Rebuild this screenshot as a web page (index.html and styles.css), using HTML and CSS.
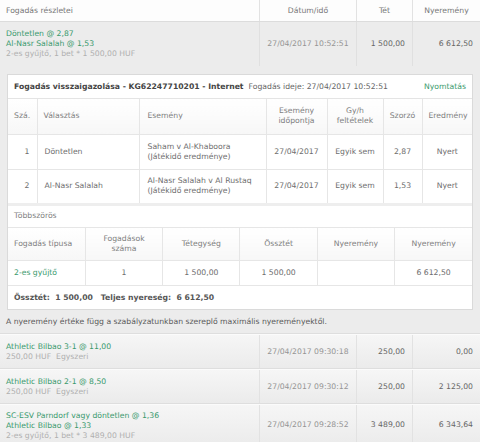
FILE: index.html
```html
<!DOCTYPE html>
<html lang="hu">
<head>
  <meta charset="UTF-8" />
  <meta name="viewport" content="width=device-width, initial-scale=1.0"/>
  <title>Fogadások</title>
  <link rel="stylesheet" href="styles.css">
</head>
<body>
  <div class="bets">
    <div class="bets-head">
      <div class="cell cell-desc">Fogadás részletei</div>
      <div class="cell cell-center">Dátum/idő</div>
      <div class="cell cell-center">Tét</div>
      <div class="cell cell-center">Nyeremény</div>
    </div>

    <div class="bet bet-open">
      <div class="bet-row">
        <div class="cell cell-desc">
          <span class="pick">Döntetlen @ 2,87</span>
          <span class="pick">Al-Nasr Salalah @ 1,53</span>
          <span class="meta">2-es gyűjtő, 1 bet * 1 500,00 HUF</span>
        </div>
        <div class="cell cell-center cell-date">27/04/2017 10:52:51</div>
        <div class="cell cell-num">1 500,00</div>
        <div class="cell cell-num">6 612,50</div>
      </div>

      <div class="detail">
        <div class="detail-title">
          <strong>Fogadás visszaigazolása - KG62247710201 - Internet</strong>
          <span class="detail-time">Fogadás ideje: 27/04/2017 10:52:51</span>
          <a class="print" href="#">Nyomtatás</a>
        </div>

        <table class="grid grid-events">
          <colgroup>
            <col style="width:29px"><col style="width:102px"><col style="width:127px"><col style="width:61px">
            <col style="width:56px"><col style="width:39px"><col style="width:50px">
          </colgroup>
          <thead>
            <tr>
              <th class="left">Szá.</th>
              <th class="left">Választás</th>
              <th class="left">Esemény</th>
              <th>Esemény<br>időpontja</th>
              <th>Gy/h<br>feltételek</th>
              <th>Szorzó</th>
              <th>Eredmény</th>
            </tr>
          </thead>
          <tbody>
            <tr>
              <td class="right">1</td>
              <td class="left">Döntetlen</td>
              <td class="left">Saham v Al-Khaboora<br>(Játékidő eredménye)</td>
              <td>27/04/2017</td>
              <td>Egyik sem</td>
              <td>2,87</td>
              <td>Nyert</td>
            </tr>
            <tr>
              <td class="right">2</td>
              <td class="left">Al-Nasr Salalah</td>
              <td class="left">Al-Nasr Salalah v Al Rustaq<br>(Játékidő eredménye)</td>
              <td>27/04/2017</td>
              <td>Egyik sem</td>
              <td>1,53</td>
              <td>Nyert</td>
            </tr>
          </tbody>
        </table>

        <div class="section-label">Többszörös</div>

        <table class="grid grid-multi">
          <thead>
            <tr>
              <th class="left">Fogadás típusa</th>
              <th>Fogadások<br>száma</th>
              <th>Tétegység</th>
              <th>Össztét</th>
              <th>Nyeremény</th>
              <th>Nyeremény</th>
            </tr>
          </thead>
          <tbody>
            <tr>
              <td class="left"><a class="pick" href="#">2-es gyűjtő</a></td>
              <td>1</td>
              <td>1 500,00</td>
              <td>1 500,00</td>
              <td></td>
              <td>6 612,50</td>
            </tr>
          </tbody>
        </table>

        <div class="totals">Össztét:&nbsp; 1 500,00 &nbsp;&nbsp;Teljes nyereség:&nbsp; 6 612,50</div>
      </div>

      <p class="note">A nyeremény értéke függ a szabályzatunkban szereplő maximális nyereményektől.</p>
    </div>

    <div class="bet">
      <div class="bet-row">
        <div class="cell cell-desc">
          <span class="pick">Athletic Bilbao 3-1 @ 11,00</span>
          <span class="meta">250,00 HUF &nbsp;Egyszeri</span>
        </div>
        <div class="cell cell-center cell-date">27/04/2017 09:30:18</div>
        <div class="cell cell-num">250,00</div>
        <div class="cell cell-num">0,00</div>
      </div>
    </div>

    <div class="bet">
      <div class="bet-row">
        <div class="cell cell-desc">
          <span class="pick">Athletic Bilbao 2-1 @ 8,50</span>
          <span class="meta">250,00 HUF &nbsp;Egyszeri</span>
        </div>
        <div class="cell cell-center cell-date">27/04/2017 09:30:12</div>
        <div class="cell cell-num">250,00</div>
        <div class="cell cell-num">2 125,00</div>
      </div>
    </div>

    <div class="bet">
      <div class="bet-row bet-row-tall">
        <div class="cell cell-desc">
          <span class="pick">SC-ESV Parndorf vagy döntetlen @ 1,36</span>
          <span class="pick">Athletic Bilbao @ 1,33</span>
          <span class="meta">2-es gyűjtő, 1 bet * 3 489,00 HUF</span>
        </div>
        <div class="cell cell-center cell-date">27/04/2017 09:28:52</div>
        <div class="cell cell-num">3 489,00</div>
        <div class="cell cell-num">6 343,64</div>
      </div>
    </div>
  </div>
</body>
</html>
```

FILE: styles.css
```css
* {
  box-sizing: border-box;
}

body {
  margin: 0;
  font-family: "DejaVu Sans", Verdana, sans-serif;
  font-size: 7.7px;
  line-height: 10px;
  color: #666;
  background: #ececec;
  overflow: hidden;
}

a {
  text-decoration: none;
}

.bets-head,
.bet-row {
  display: grid;
  grid-template-columns: 259px 97px 56px 1fr;
}

.bets-head {
  height: 22px;
  background: #fdfdfd;
  border-bottom: 1px solid #dcdcdc;
  color: #777;
}

.cell {
  display: flex;
  align-items: center;
  padding: 0 7px;
}

.cell + .cell {
  border-left: 1px solid #e2e2e2;
}

.cell-desc {
  flex-direction: column;
  align-items: flex-start;
  justify-content: center;
  padding-left: 6px;
}

.cell-center {
  justify-content: center;
}

.cell-num {
  justify-content: flex-end;
}

.cell-date {
  color: #959595;
}

.pick {
  color: #3a9a6e;
}

.meta {
  color: #b0b0b0;
}

.bet {
  background: linear-gradient(#f6f6f6, #ebebeb);
  border-top: 1px solid #fbfbfb;
  border-bottom: 1px solid #dedede;
}

.bet-row {
  height: 33px;
}

.bet-row-tall {
  height: 40px;
}

.bet-row-tall .cell-desc {
  justify-content: flex-start;
  padding-top: 6px;
}

.bet-open {
  background: #ececec;
  border-top: 0;
}

.bet-open .bet-row {
  height: 44px;
}

.bet-open .cell + .cell {
  border-left-color: #e0e0e0;
}

.detail {
  margin: 8px 0 0 7px;
  width: 466px;
  background: #fff;
  border: 1px solid #dadada;
}

.detail-title {
  display: flex;
  align-items: center;
  height: 24px;
  padding: 0 6px;
  border-bottom: 1px solid #e4e4e4;
  color: #666;
}

.detail-title strong {
  color: #444;
}

.detail-time {
  margin-left: 5px;
}

.print {
  margin-left: auto;
  color: #3a9a6e;
}

.grid {
  width: 100%;
  table-layout: fixed;
  border-collapse: collapse;
  color: #6e6e6e;
}

.grid th,
.grid td {
  padding: 0 6px;
  text-align: center;
  font-weight: normal;
  border-left: 1px solid #e6e6e6;
  border-bottom: 1px solid #e6e6e6;
}

.grid th:first-child,
.grid td:first-child {
  border-left: 0;
}

.grid th {
  color: #808080;
  background: linear-gradient(#fff, #f7f7f7);
}

.grid .left {
  text-align: left;
}

.grid .right {
  text-align: right;
  padding-right: 7px;
}

.grid-events th {
  height: 35px;
}

.grid-events td {
  height: 35px;
}

.grid-events tbody tr:last-child td {
  border-bottom: 3px solid #eee;
}

.grid-events td:nth-child(2) {
  padding-left: 7px;
}

.grid-events td:nth-child(3),
.grid-events th:nth-child(3) {
  padding-left: 8px;
}

.section-label {
  height: 22px;
  padding: 0 6px;
  display: flex;
  align-items: center;
  color: #808080;
  border-bottom: 1px solid #e6e6e6;
}

.grid-multi th {
  height: 33px;
}

.grid-multi td {
  height: 25px;
}

.totals {
  height: 23px;
  padding: 0 6px;
  display: flex;
  align-items: center;
  font-weight: bold;
  color: #555;
}

.note {
  margin: 0;
  height: 23px;
  padding: 0 6px;
  display: flex;
  align-items: center;
  color: #5a5a5a;
}
```
